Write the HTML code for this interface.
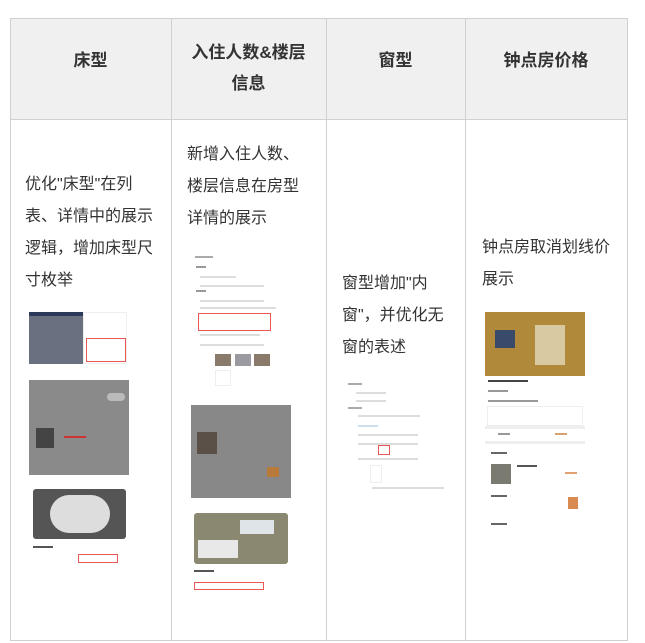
<!DOCTYPE html>
<html><head><meta charset="utf-8"><style>
*{margin:0;padding:0;box-sizing:border-box}
body{width:645px;height:643px;background:#fff;position:relative;overflow:hidden;font-family:"Liberation Sans","Noto Sans CJK SC",sans-serif;color:#333}
.v{position:absolute;top:18px;width:1px;height:623px;background:#d0d0d0}
.h{position:absolute;left:10px;width:617px;height:1px;background:#d0d0d0}
.hb{position:absolute;top:19px;height:100px;background:#f0f0f0}
.hd{position:absolute;text-align:center;font-weight:bold;font-size:17px;line-height:31px;color:#333}
.t{position:absolute;font-size:16px;line-height:32px;color:#333}
.g{position:absolute;background:#777}
.w{position:absolute;background:#fff;border:1px solid #eee}
.ln{position:absolute;height:2px;background:#ddd}
.r{position:absolute;border:1.5px solid #e55}
</style></head><body>
<div class="hb" style="left:10px;width:617px"></div>
<div class="hd" style="left:10px;width:161px;top:45px">床型</div>
<div class="hd" style="left:171px;width:155px;top:37px">入住人数&amp;楼层<br>信息</div>
<div class="hd" style="left:326px;width:139px;top:45px">窗型</div>
<div class="hd" style="left:465px;width:162px;top:45px">钟点房价格</div>
<div class="h" style="top:18px"></div><div class="h" style="top:119px"></div><div class="h" style="top:640px"></div>
<div class="v" style="left:10px"></div><div class="v" style="left:171px"></div><div class="v" style="left:326px"></div><div class="v" style="left:465px"></div><div class="v" style="left:627px"></div>

<div class="t" style="left:25px;top:169px">优化"床型"在列<br>表、详情中的展示<br>逻辑，增加床型尺<br>寸枚举</div>
<div class="t" style="left:187px;top:139px">新增入住人数、<br>楼层信息在房型<br>详情的展示</div>
<div class="t" style="left:342px;top:268px">窗型增加"内<br>窗"，并优化无<br>窗的表述</div>
<div class="t" style="left:482px;top:232px">钟点房取消划线价<br>展示</div>

<div class="g" style="left:29px;top:312px;width:54px;height:52px;background:#6a7080"></div>
<div class="g" style="left:29px;top:312px;width:54px;height:4px;background:#2b3a5a"></div>
<div class="w" style="left:83px;top:312px;width:44px;height:52px"></div>
<div class="r" style="left:86px;top:338px;width:40px;height:24px"></div>
<div class="g" style="left:29px;top:380px;width:100px;height:95px;background:#8a8a8a"></div>
<div class="g" style="left:36px;top:428px;width:18px;height:20px;background:#444"></div>
<div class="ln" style="left:64px;top:436px;width:22px;background:#c33"></div>
<div class="g" style="left:107px;top:393px;width:18px;height:8px;background:#bbb;border-radius:4px"></div>
<div class="g" style="left:33px;top:489px;width:93px;height:50px;background:#555;border-radius:3px"></div>
<div class="g" style="left:50px;top:495px;width:60px;height:38px;background:#ddd;border-radius:20px"></div>
<div class="ln" style="left:33px;top:546px;width:20px;background:#555"></div>
<div class="r" style="left:78px;top:554px;width:40px;height:9px"></div>

<div class="ln" style="left:195px;top:256px;width:18px;background:#aaa"></div>
<div class="ln" style="left:196px;top:266px;width:10px;background:#999"></div>
<div class="ln" style="left:200px;top:276px;width:36px"></div>
<div class="ln" style="left:200px;top:285px;width:64px"></div>
<div class="ln" style="left:196px;top:290px;width:10px;background:#999"></div>
<div class="ln" style="left:200px;top:300px;width:64px"></div>
<div class="ln" style="left:200px;top:307px;width:76px"></div>
<div class="r" style="left:198px;top:313px;width:73px;height:18px"></div>
<div class="ln" style="left:200px;top:334px;width:60px"></div>
<div class="ln" style="left:200px;top:344px;width:64px"></div>
<div class="g" style="left:215px;top:354px;width:16px;height:12px;background:#8a7a6a"></div>
<div class="g" style="left:235px;top:354px;width:16px;height:12px;background:#9a9aa0"></div>
<div class="g" style="left:254px;top:354px;width:16px;height:12px;background:#8a7a6a"></div>
<div class="w" style="left:215px;top:370px;width:16px;height:16px"></div>
<div class="g" style="left:191px;top:405px;width:100px;height:93px;background:#888"></div>
<div class="g" style="left:197px;top:432px;width:20px;height:22px;background:#5a5048"></div>
<div class="g" style="left:267px;top:467px;width:12px;height:10px;background:#b87a3a"></div>
<div class="g" style="left:194px;top:513px;width:94px;height:51px;background:#8a8870;border-radius:3px"></div>
<div class="g" style="left:198px;top:540px;width:40px;height:18px;background:#e8e8e8"></div>
<div class="g" style="left:240px;top:520px;width:34px;height:14px;background:#dfe4e8"></div>
<div class="ln" style="left:194px;top:570px;width:20px;background:#555"></div>
<div class="r" style="left:194px;top:582px;width:70px;height:8px"></div>

<div class="ln" style="left:348px;top:383px;width:14px;background:#aaa"></div>
<div class="ln" style="left:356px;top:392px;width:30px"></div>
<div class="ln" style="left:356px;top:400px;width:30px"></div>
<div class="ln" style="left:348px;top:407px;width:14px;background:#aaa"></div>
<div class="ln" style="left:358px;top:415px;width:62px"></div>
<div class="ln" style="left:358px;top:425px;width:20px;background:#cde"></div>
<div class="ln" style="left:358px;top:434px;width:60px"></div>
<div class="ln" style="left:358px;top:443px;width:60px"></div>
<div class="r" style="left:378px;top:445px;width:12px;height:10px"></div>
<div class="ln" style="left:358px;top:458px;width:60px"></div>
<div class="w" style="left:370px;top:465px;width:12px;height:18px"></div>
<div class="ln" style="left:372px;top:487px;width:72px"></div>

<div class="g" style="left:485px;top:312px;width:100px;height:64px;background:#b08a3a"></div>
<div class="g" style="left:495px;top:330px;width:20px;height:18px;background:#3a4a6a"></div>
<div class="g" style="left:535px;top:325px;width:30px;height:40px;background:#d8c9a0"></div>
<div class="ln" style="left:488px;top:380px;width:40px;background:#444"></div>
<div class="ln" style="left:488px;top:390px;width:20px;background:#999"></div>
<div class="ln" style="left:488px;top:400px;width:50px;background:#999"></div>
<div class="w" style="left:487px;top:406px;width:96px;height:20px"></div>
<div class="g" style="left:485px;top:426px;width:100px;height:3px;background:#eee"></div>
<div class="ln" style="left:498px;top:433px;width:12px;background:#999"></div>
<div class="ln" style="left:555px;top:433px;width:12px;background:#d9a070"></div>
<div class="g" style="left:485px;top:441px;width:100px;height:3px;background:#eee"></div>
<div class="ln" style="left:491px;top:452px;width:16px;background:#666"></div>
<div class="g" style="left:491px;top:464px;width:20px;height:20px;background:#7a7a70"></div>
<div class="ln" style="left:517px;top:465px;width:20px;background:#555"></div>
<div class="ln" style="left:565px;top:472px;width:12px;background:#e0a070"></div>
<div class="ln" style="left:491px;top:495px;width:16px;background:#666"></div>
<div class="g" style="left:568px;top:497px;width:10px;height:12px;background:#d98a50"></div>
<div class="ln" style="left:491px;top:523px;width:16px;background:#666"></div>
</body></html>
